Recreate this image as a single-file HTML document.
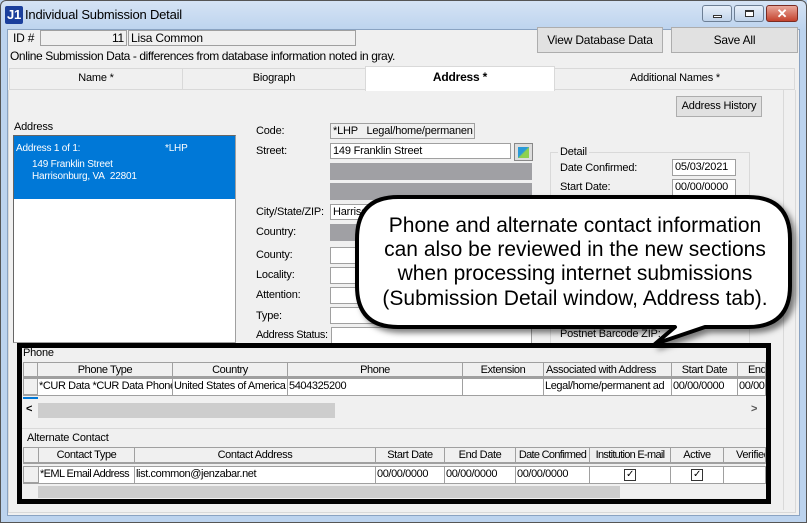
<!DOCTYPE html>
<html><head><meta charset="utf-8"><style>
*{box-sizing:border-box;margin:0;padding:0}
body{width:807px;height:523px;overflow:hidden;background:#bcd3ee;font-family:"Liberation Sans",sans-serif;font-size:11px;color:#000;position:relative;letter-spacing:-0.2px}
.a{position:absolute;white-space:nowrap}
.f{position:absolute;background:#fff;border:1px solid #a0a0a0;padding-left:2px;line-height:14px;overflow:hidden;white-space:nowrap}
.ro{background:#f0f0f0}
.g{position:absolute;background:#a0a0a4}
.btn{position:absolute;background:#e1e1e1;border:1px solid #adadad;text-align:center;font-size:12px;white-space:nowrap}
.hd{position:absolute;background:#f0f0f0;border:1px solid #a0a0a0;border-bottom:2px solid #a0a0a0;text-align:center;line-height:14px;overflow:hidden;white-space:nowrap;letter-spacing:-0.4px}
.c{position:absolute;background:#fff;border:1px solid #a0a0a0;line-height:15px;overflow:hidden;white-space:nowrap;padding-left:1px;letter-spacing:-0.4px}
</style></head><body>
<div class="a" style="left:0;top:0;width:807px;height:523px;background:linear-gradient(#d5e3f4,#bcd3ee 30px,#bcd3ee);border:1px solid #555;border-radius:6px 6px 0 0"></div>
<div class="a" style="left:5px;top:6px;width:18px;height:18px;background:#1b3f9c;color:#fff;font-weight:bold;font-size:13px;line-height:18px;text-align:center;border-radius:2px">J1</div>
<div class="a" style="left:25px;top:7px;font-size:13px">Individual Submission Detail</div>
<div class="a" style="left:702px;top:5px;width:30px;height:17px;border:1px solid #6d7f95;border-radius:3px;background:linear-gradient(#e8f0fa,#c0d3ea)"><div class="a" style="left:10px;top:9px;width:9px;height:3px;border:1px solid #333;background:#fff"></div></div>
<div class="a" style="left:734px;top:5px;width:30px;height:17px;border:1px solid #6d7f95;border-radius:3px;background:linear-gradient(#e8f0fa,#c0d3ea)"><div class="a" style="left:10px;top:4px;width:9px;height:7px;border:1px solid #333;border-top-width:2px;background:#fff"></div></div>
<div class="a" style="left:766px;top:5px;width:32px;height:17px;border:1px solid #7a2b22;border-radius:3px;background:linear-gradient(#e9a89b,#c4422d);color:#fff;font-weight:bold;text-align:center;font-size:13px;line-height:15px">✕</div>
<div class="a" style="left:7px;top:29px;width:793px;height:487px;background:#f0f0f0;border:1px solid #8aa3c2"></div>
<div class="a" style="left:13px;top:31px;font-size:12px">ID #</div>
<div class="f ro" style="left:40px;top:30px;width:87px;height:16px;text-align:right;padding-right:2px;font-size:12px">11</div>
<div class="f ro" style="left:128px;top:30px;width:228px;height:16px;font-size:12px">Lisa Common</div>
<div class="btn" style="left:537px;top:27px;width:126px;height:26px;line-height:24px">View Database Data</div>
<div class="btn" style="left:671px;top:27px;width:127px;height:26px;line-height:24px">Save All</div>
<div class="a" style="left:10px;top:49px;font-size:12px;letter-spacing:-0.4px">Online Submission Data - differences from database information noted in gray.</div>
<div class="a" style="left:9px;top:68px;width:786px;height:22px;background:#f0f0f0;border:1px solid #d9d9d9"></div>
<div class="a" style="left:9px;top:72px;width:174px;text-align:center">Name *</div>
<div class="a" style="left:182px;top:68px;width:1px;height:21px;background:#d9d9d9"></div>
<div class="a" style="left:183px;top:72px;width:182px;text-align:center">Biograph</div>
<div class="a" style="left:365px;top:66px;width:190px;height:25px;background:#fff;border:1px solid #d9d9d9;border-bottom:none;text-align:center;font-weight:bold;font-size:12px;line-height:20px">Address *</div>
<div class="a" style="left:555px;top:72px;width:240px;text-align:center">Additional Names *</div>
<div class="a" style="left:8px;top:90px;width:788px;height:423px;border:1px solid #d9d9d9;border-top:none"></div>
<div class="btn" style="left:676px;top:96px;width:86px;height:21px;line-height:19px;font-size:11px">Address History</div>
<div class="a" style="left:14px;top:121px">Address</div>
<div class="a" style="left:13px;top:135px;width:223px;height:208px;background:#fff;border:1px solid #a0a0a0;border-left-color:#666;border-top-color:#666"></div>
<div class="a" style="left:14px;top:136px;width:221px;height:63px;background:#0078d7;color:#fff;font-size:10px">
<div class="a" style="left:2px;top:7px">Address 1 of 1:</div><div class="a" style="left:151px;top:7px">*LHP</div>
<div class="a" style="left:18px;top:23px">149 Franklin Street</div><div class="a" style="left:18px;top:35px">Harrisonburg, VA&nbsp; 22801</div></div>
<div class="a" style="left:256px;top:125px">Code:</div><div class="f ro" style="left:330px;top:123px;width:145px;height:16px">*LHP&nbsp;&nbsp; Legal/home/permanen</div>
<div class="a" style="left:256px;top:145px">Street:</div><div class="f" style="left:330px;top:143px;width:181px;height:16px">149 Franklin Street</div>
<div class="a" style="left:514px;top:143px;width:19px;height:18px;border:1px solid #888;background:#ddd"><div class="a" style="left:3px;top:3px;width:11px;height:11px;background:linear-gradient(135deg,#2a9ad8 45%,#8fd14f 55%)"></div></div>
<div class="g" style="left:330px;top:163px;width:202px;height:17px"></div>
<div class="g" style="left:330px;top:183px;width:202px;height:17px"></div>
<div class="a" style="left:256px;top:206px">City/State/ZIP:</div><div class="f" style="left:330px;top:204px;width:60px;height:16px">Harrisonburg</div>
<div class="a" style="left:256px;top:226px">Country:</div><div class="g" style="left:330px;top:224px;width:60px;height:17px"></div>
<div class="a" style="left:256px;top:249px">County:</div><div class="f" style="left:330px;top:247px;width:60px;height:17px"></div>
<div class="a" style="left:256px;top:269px">Locality:</div><div class="f" style="left:330px;top:267px;width:60px;height:17px"></div>
<div class="a" style="left:256px;top:289px">Attention:</div><div class="f" style="left:330px;top:287px;width:60px;height:17px"></div>
<div class="a" style="left:256px;top:310px">Type:</div><div class="f" style="left:330px;top:307px;width:60px;height:17px"></div>
<div class="a" style="left:256px;top:329px;letter-spacing:-0.4px">Address Status:</div><div class="f" style="left:331px;top:327px;width:201px;height:17px"></div>
<div class="a" style="left:550px;top:152px;width:200px;height:192px;border:1px solid #d9d9d9"></div>
<div class="a" style="left:558px;top:146px;background:#f0f0f0;padding:0 2px">Detail</div>
<div class="a" style="left:560px;top:162px">Date Confirmed:</div><div class="f" style="left:672px;top:159px;width:64px;height:17px">05/03/2021</div>
<div class="a" style="left:560px;top:181px">Start Date:</div><div class="f" style="left:672px;top:179px;width:64px;height:17px">00/00/0000</div>
<div class="a" style="left:560px;top:328px">Postnet Barcode ZIP:</div>
<div class="a" style="left:783px;top:90px;width:1px;height:420px;background:#d9d9d9"></div>

<div class="a" style="left:17px;top:343px;width:754px;height:161px;border:5px solid #000;background:#f0f0f0"></div>
<div class="a" style="left:23px;top:347px">Phone</div>
<div class="hd" style="left:23px;top:362px;width:15px;height:16px"></div>
<div class="hd" style="left:37px;top:362px;width:136px;height:16px">Phone Type</div>
<div class="hd" style="left:172px;top:362px;width:116px;height:16px">Country</div>
<div class="hd" style="left:287px;top:362px;width:176px;height:16px">Phone</div>
<div class="hd" style="left:462px;top:362px;width:82px;height:16px">Extension</div>
<div class="hd" style="left:543px;top:362px;width:129px;height:16px;text-align:left;padding-left:2px">Associated with Address</div>
<div class="hd" style="left:671px;top:362px;width:67px;height:16px">Start Date</div>
<div class="hd" style="left:737px;top:362px;width:29px;height:16px;text-align:left;padding-left:10px">End</div>
<div class="hd" style="left:23px;top:378px;width:15px;height:18px"></div>
<div class="c" style="left:37px;top:378px;width:136px;height:18px">*CUR Data *CUR Data Phone</div>
<div class="c" style="left:172px;top:378px;width:116px;height:18px">United States of America</div>
<div class="c" style="left:287px;top:378px;width:176px;height:18px">5404325200</div>
<div class="c" style="left:462px;top:378px;width:82px;height:18px"></div>
<div class="c" style="left:543px;top:378px;width:129px;height:18px">Legal/home/permanent ad</div>
<div class="c" style="left:671px;top:378px;width:67px;height:18px">00/00/0000</div>
<div class="c" style="left:737px;top:378px;width:29px;height:18px">00/00</div>
<div class="a" style="left:23px;top:397px;width:15px;height:2px;background:#0078d7"></div>
<div class="a" style="left:26px;top:403px;font-size:11px;font-weight:bold">&lt;</div>
<div class="a" style="left:38px;top:403px;width:297px;height:15px;background:#cdcdcd"></div>
<div class="a" style="left:751px;top:403px;font-size:11px;color:#555;font-weight:bold">&gt;</div>
<div class="a" style="left:22px;top:428px;width:744px;height:1px;background:#d9d9d9"></div>
<div class="a" style="left:27px;top:432px">Alternate Contact</div>
<div class="hd" style="left:23px;top:447px;width:16px;height:17px"></div>
<div class="hd" style="left:38px;top:447px;width:97px;height:17px">Contact Type</div>
<div class="hd" style="left:134px;top:447px;width:242px;height:17px">Contact Address</div>
<div class="hd" style="left:375px;top:447px;width:70px;height:17px">Start Date</div>
<div class="hd" style="left:444px;top:447px;width:72px;height:17px">End Date</div>
<div class="hd" style="left:515px;top:447px;width:75px;height:17px;letter-spacing:-0.7px">Date Confirmed</div>
<div class="hd" style="left:589px;top:447px;width:82px;height:17px;letter-spacing:-0.7px">Institution E-mail</div>
<div class="hd" style="left:670px;top:447px;width:54px;height:17px">Active</div>
<div class="hd" style="left:723px;top:447px;width:43px;height:17px;text-align:left;padding-left:12px">Verified</div>
<div class="hd" style="left:23px;top:466px;width:16px;height:18px"></div>
<div class="c ro" style="left:38px;top:466px;width:97px;height:18px;letter-spacing:-0.6px">*EML Email Address</div>
<div class="c" style="left:134px;top:466px;width:242px;height:18px">list.common@jenzabar.net</div>
<div class="c" style="left:375px;top:466px;width:70px;height:18px">00/00/0000</div>
<div class="c" style="left:444px;top:466px;width:72px;height:18px">00/00/0000</div>
<div class="c" style="left:515px;top:466px;width:75px;height:18px">00/00/0000</div>
<div class="c" style="left:589px;top:466px;width:82px;height:18px"><div class="a" style="left:34px;top:2px;width:12px;height:12px;border:1px solid #333;font-size:10px;line-height:10px;text-align:center">✓</div></div>
<div class="c" style="left:670px;top:466px;width:54px;height:18px"><div class="a" style="left:20px;top:2px;width:12px;height:12px;border:1px solid #333;font-size:10px;line-height:10px;text-align:center">✓</div></div>
<div class="c" style="left:723px;top:466px;width:43px;height:18px"></div>
<div class="a" style="left:38px;top:486px;width:582px;height:12px;background:#cdcdcd"></div>

<svg class="a" style="left:0;top:0" width="807" height="523">
<defs><filter id="s" x="-10%" y="-10%" width="130%" height="130%"><feDropShadow dx="4" dy="4" stdDeviation="3" flood-color="#000" flood-opacity="0.5"/></filter></defs>
<path filter="url(#s)" d="M398 197 H748 Q790 197 790 239 V286 Q790 327 748 327 H705 L655 344 L675 327 H398 Q357 327 357 286 V239 Q357 197 398 197 Z" fill="#fff" stroke="#000" stroke-width="4" stroke-linejoin="round"/>
<g font-family="Liberation Sans, sans-serif" font-size="21" text-anchor="middle" fill="#000" letter-spacing="0">
<text x="575" y="232">Phone and alternate contact information</text>
<text x="575" y="256">can also be reviewed in the new sections</text>
<text x="575" y="280">when processing internet submissions</text>
<text x="575" y="305">(Submission Detail window, Address tab).</text>
</g></svg>
</body></html>
